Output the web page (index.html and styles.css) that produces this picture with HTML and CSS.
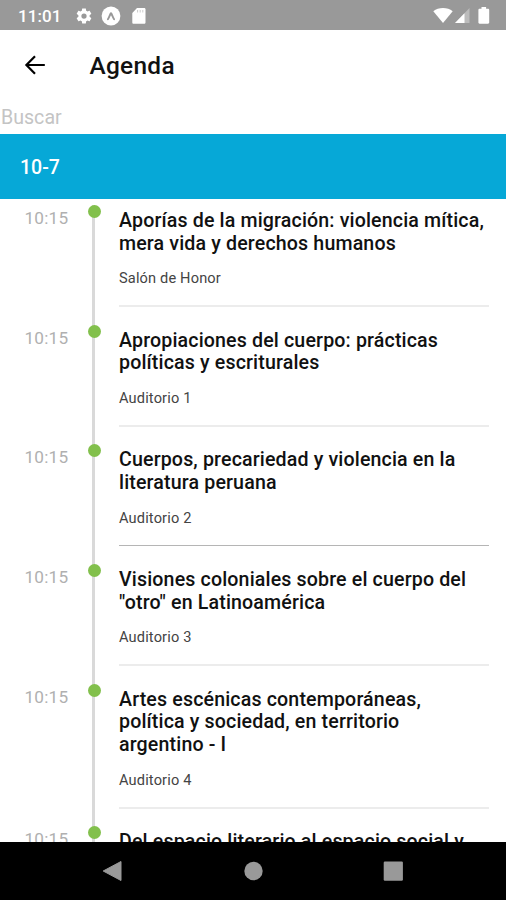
FILE: index.html
```html
<!DOCTYPE html>
<html lang="es">
<head>
    <meta charset="UTF-8">
    <meta name="viewport" content="width=device-width, initial-scale=1.0">
    <title>Agenda</title>
    <link rel="stylesheet" href="styles.css">
</head>
<body>
    <div class="screen">
        <div class="status-bar">
            <span class="clock">11:01</span>
            <svg class="icon-gear" width="18" height="18" viewBox="0 0 24 24"><path fill="#fff" d="M19.43 12.98c.04-.32.07-.64.07-.98s-.03-.66-.07-.98l2.11-1.65c.19-.15.24-.42.12-.64l-2-3.46c-.12-.22-.39-.3-.61-.22l-2.49 1c-.52-.4-1.08-.73-1.69-.98l-.38-2.65C14.46 2.18 14.25 2 14 2h-4c-.25 0-.46.18-.49.42l-.38 2.65c-.61.25-1.17.59-1.69.98l-2.49-1c-.23-.09-.49 0-.61.22l-2 3.46c-.13.22-.07.49.12.64l2.11 1.65c-.04.32-.07.65-.07.98s.03.66.07.98l-2.11 1.65c-.19.15-.24.42-.12.64l2 3.46c.12.22.39.3.61.22l2.49-1c.52.4 1.08.73 1.69.98l.38 2.65c.03.24.24.42.49.42h4c.25 0 .46-.18.49-.42l.38-2.65c.61-.25 1.17-.59 1.69-.98l2.49 1c.23.09.49 0 .61-.22l2-3.46c.12-.22.07-.49-.12-.64l-2.11-1.65zM12 15.500a3.500 3.500 0 1 1 0-7 3.500 3.500 0 0 1 0 7z"/></svg>
            <svg class="icon-expo" width="20" height="20" viewBox="0 0 20 20"><circle cx="10" cy="10" r="9.400" fill="#fff"/><path d="M6.900 13.200C8.300 11.300 8.900 8.500 10 7.200c1.100 1.300 1.700 4.100 3.100 6" fill="none" stroke="#999" stroke-width="1.900" stroke-linecap="round" stroke-linejoin="round"/></svg>
            <svg class="icon-sd" width="14" height="16" viewBox="0 0 14 16"><path fill="#fff" d="M5 0h7.200C13 0 13.500.6 13.500 1.300v13.200c0 .8-.6 1.300-1.300 1.300H1.500C.8 15.800.3 15.300.3 14.500V4.900z"/><path d="M5.600 2v2.500M8.200 2v2.500M10.800 2v2.500" stroke="#ccc" stroke-width="1"/></svg>
            <div class="status-right">
                <svg width="20" height="17" viewBox="0 0 20 17"><path fill="#fff" d="M.3 4.200C3 2 6.300 1 10 1s7 1 9.700 3.200L10 16z"/></svg>
                <svg class="icon-signal" width="15" height="15" viewBox="0 0 15 15"><path fill="#fff" fill-opacity=".35" d="M14.500 0v15H0z"/><path fill="#fff" d="M9.500 5.200V15H0z"/></svg>
                <svg class="icon-battery" width="12" height="17" viewBox="0 0 12 17"><path fill="#fff" d="M3.500 0h4.600v1.700h1.900c.7 0 1.200.5 1.200 1.200v12.600c0 .7-.5 1.200-1.200 1.200H1.600c-.7 0-1.200-.5-1.200-1.200V2.900c0-.7.5-1.200 1.200-1.200h1.900z"/></svg>
            </div>
        </div>

        <header class="header">
            <svg class="back" width="22" height="22" viewBox="0 0 22 22"><path d="M20.800 11H2.500M11 2.300 2.400 11l8.600 8.700" fill="none" stroke="#000" stroke-width="2.200"/></svg>
            <h1>Agenda</h1>
        </header>

        <input class="search" type="text" placeholder="Buscar">
        <div class="day">10-7</div>

        <main class="agenda">
            <div class="event">
                <div class="time">10:15</div>
                <div class="rail"><div class="dot"></div></div>
                <div class="info">
                    <h2>Aporías de la migración: violencia mítica,<br>mera vida y derechos humanos</h2>
                    <p>Salón de Honor</p>
                </div>
            </div>
            <div class="event">
                <div class="time">10:15</div>
                <div class="rail"><div class="dot"></div></div>
                <div class="info">
                    <h2>Apropiaciones del cuerpo: prácticas<br>políticas y escriturales</h2>
                    <p>Auditorio 1</p>
                </div>
            </div>
            <div class="event">
                <div class="time">10:15</div>
                <div class="rail"><div class="dot"></div></div>
                <div class="info info-dark">
                    <h2>Cuerpos, precariedad y violencia en la<br>literatura peruana</h2>
                    <p>Auditorio 2</p>
                </div>
            </div>
            <div class="event">
                <div class="time">10:15</div>
                <div class="rail"><div class="dot"></div></div>
                <div class="info">
                    <h2>Visiones coloniales sobre el cuerpo del<br>"otro" en Latinoamérica</h2>
                    <p>Auditorio 3</p>
                </div>
            </div>
            <div class="event">
                <div class="time">10:15</div>
                <div class="rail"><div class="dot"></div></div>
                <div class="info">
                    <h2>Artes escénicas contemporáneas,<br>política y sociedad, en territorio<br>argentino - I</h2>
                    <p>Auditorio 4</p>
                </div>
            </div>
            <div class="event">
                <div class="time">10:15</div>
                <div class="rail"><div class="dot"></div></div>
                <div class="info">
                    <h2>Del espacio literario al espacio social y</h2>
                </div>
            </div>
        </main>

        <nav class="nav-bar">
            <svg width="22" height="22" viewBox="0 0 22 22"><path fill="#999" d="M19 1.500v19L1.200 11z" stroke="#999" stroke-linejoin="round"/></svg>
            <svg width="22" height="22" viewBox="0 0 22 22"><circle cx="11.500" cy="11" r="9.200" fill="#999"/></svg>
            <svg width="22" height="22" viewBox="0 0 22 22"><rect x="1.700" y="1.600" width="19.200" height="19.200" rx="1.200" fill="#999"/></svg>
        </nav>
    </div>
</body>
</html>
```
FILE: styles.css
```css
:root {
    --primary-color: #06a8d7;
    --dot-color: #82c04c;
    --line-color: #d9d9d9;
    --muted-color: #b0b0b0;
}

* {
    box-sizing: border-box;
    margin: 0;
    padding: 0;
}

body {
    font-family: Roboto, "Liberation Sans", sans-serif;
    background-color: #fff;
    color: #111;
}

svg {
    display: block;
    flex: none;
}

.screen {
    width: 506px;
    height: 900px;
    display: flex;
    flex-direction: column;
    overflow: hidden;
}

.status-bar {
    flex: none;
    height: 30px;
    padding: 1px 16px 0 18px;
    display: flex;
    align-items: center;
    background-color: #999;
    color: #fff;
}

.clock {
    width: 57px;
    font-size: 17px;
    font-weight: 500;
    letter-spacing: 0.1px;
}

.icon-expo {
    margin-left: 8px;
}

.icon-sd {
    margin-left: 11px;
}

.status-right {
    display: flex;
    align-items: center;
    margin-left: auto;
}

.icon-signal {
    margin-left: 2px;
}

.icon-battery {
    margin-left: 8px;
}

.header {
    flex: none;
    height: 70px;
    padding-left: 24px;
    display: flex;
    align-items: center;
}

.header h1 {
    margin-left: 43.5px;
    padding-top: 1px;
    font-size: 24.4px;
    font-weight: 500;
    letter-spacing: 0.3px;
}

.search {
    flex: none;
    height: 33.5px;
    padding: 2px 0 0 1px;
    border: none;
    outline: none;
    background: none;
    font-family: inherit;
    font-size: 19.6px;
}

.search::placeholder {
    color: #c4c4c4;
}

.day {
    flex: none;
    height: 65.5px;
    padding-left: 20px;
    line-height: 67px;
    background-color: var(--primary-color);
    color: #fff;
    font-size: 19.5px;
    font-weight: 500;
}

.agenda {
    flex: 1;
    min-height: 0;
    padding-top: 6px;
    overflow: hidden;
}

.event {
    display: flex;
}

.time {
    width: 92px;
    padding: 2px 0 0 24.5px;
    font-size: 17.2px;
    line-height: 22px;
    letter-spacing: 0.2px;
    color: var(--muted-color);
}

.rail {
    width: 3px;
    display: flex;
    justify-content: center;
    background-color: var(--line-color);
}

.dot {
    flex: none;
    width: 13px;
    height: 13px;
    margin-left: 1.5px;
    border-radius: 50%;
    background-color: var(--dot-color);
}

.info {
    width: 370px;
    margin-left: 24px;
    padding-top: 4.9px;
}

.info::after {
    content: "";
    display: block;
    height: 2px;
    margin: 18px 0 17.3px;
    background-color: #ececec;
}

.info-dark::after {
    height: 1px;
    margin: 18.6px 0 17.7px;
    background-color: #b5b5b5;
}

.info h2 {
    font-size: 19.6px;
    font-weight: 500;
    line-height: 22.8px;
    letter-spacing: 0.15px;
    white-space: nowrap;
}

.info p {
    margin-top: 13.9px;
    font-size: 14.6px;
    line-height: 18px;
    letter-spacing: 0.15px;
    color: #444;
}

.nav-bar {
    flex: none;
    height: 58px;
    padding: 0 102px;
    display: flex;
    align-items: center;
    justify-content: space-between;
    background-color: #000;
}
```
